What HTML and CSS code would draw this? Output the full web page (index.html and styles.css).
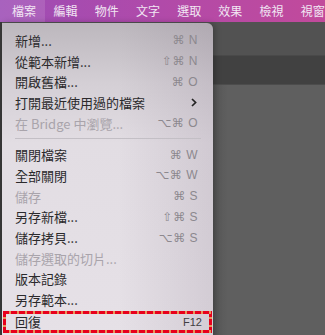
FILE: index.html
```html
<!DOCTYPE html>
<html lang="zh-Hant">
  <head>
    <meta charset="UTF-8" />
    <title>檔案選單</title>
    <link rel="stylesheet" href="styles.css">
  </head>
  <body>
    <div class="menubar">
      <span class="menubar-item active">檔案</span>
      <span class="menubar-item">編輯</span>
      <span class="menubar-item">物件</span>
      <span class="menubar-item">文字</span>
      <span class="menubar-item">選取</span>
      <span class="menubar-item">效果</span>
      <span class="menubar-item">檢視</span>
      <span class="menubar-item">視窗</span>
    </div>

    <div class="workspace">
      <div class="app-bar"></div>
      <div class="control-bar"></div>
      <div class="canvas"></div>

      <div class="dropdown">
        <div class="item"><span>新增...</span><span class="keys">⌘ N</span></div>
        <div class="item"><span>從範本新增...</span><span class="keys">⇧⌘ N</span></div>
        <div class="item"><span>開啟舊檔...</span><span class="keys">⌘ O</span></div>
        <div class="item">
          <span>打開最近使用過的檔案</span>
          <svg class="chevron" width="6" height="9" viewBox="0 0 6 9">
            <path d="M1 1 L4.6 4.5 L1 8" fill="none" stroke="#222" stroke-width="1.7" />
          </svg>
        </div>
        <div class="item disabled"><span>在 Bridge 中瀏覽...</span><span class="keys">⌥⌘ O</span></div>

        <div class="separator"></div>

        <div class="item"><span>關閉檔案</span><span class="keys">⌘ W</span></div>
        <div class="item"><span>全部關閉</span><span class="keys">⌥⌘ W</span></div>
        <div class="item disabled"><span>儲存</span><span class="keys">⌘ S</span></div>
        <div class="item"><span>另存新檔...</span><span class="keys">⇧⌘ S</span></div>
        <div class="item"><span>儲存拷貝...</span><span class="keys">⌥⌘ S</span></div>
        <div class="item disabled"><span>儲存選取的切片...</span></div>
        <div class="item"><span>版本記錄</span></div>
        <div class="item"><span>另存範本...</span></div>
        <div class="item highlight"><span>回復</span><span class="fkey">F12</span></div>
      </div>
    </div>
  </body>
</html>
```

FILE: styles.css
```css
body {
    margin: 0;
    background-color: #5f5f5f;
    font-family: 'Noto Sans CJK TC', 'Noto Sans', sans-serif;
    overflow: hidden;
}

.menubar {
    height: 22px;
    display: flex;
    align-items: center;
    background: linear-gradient(to right, #9d4db5 0%, #b14aa9 50%, #c24a9b 100%);
}

.menubar-item {
    width: 41.2px;
    height: 22px;
    line-height: 22px;
    text-align: center;
    font-size: 12px;
    color: #f1e6f3;
    flex-shrink: 0;
}

.menubar-item.active {
    width: 45px;
    padding-left: 3px;
    box-sizing: border-box;
    background-color: rgba(255, 255, 255, 0.12);
}

.workspace {
    position: relative;
    border-left: 2px solid #393939;
}

.app-bar {
    height: 33px;
    background-color: #525252;
}

.control-bar {
    height: 28px;
    background-color: #414141;
    border-top: 1px solid #494949;
    border-bottom: 1px solid #4c4c4c;
}

.canvas {
    height: 260px;
    background: linear-gradient(to right, #545454 208px, #5f5f5f 226px);
}

/* the open File menu */
.dropdown {
    position: absolute;
    top: 1px;
    left: 0;
    width: 211px;
    padding-top: 7px;
    padding-bottom: 8px;
    border-top-right-radius: 6px;
    background:
        linear-gradient(to right, rgba(90, 70, 95, 0) 55%, rgba(90, 70, 95, 0.13) 100%),
        linear-gradient(to bottom, #bcb7bd 0, #d4cfd5 60px, #e2dde3 120px, #e6e1e7 100%);
    box-shadow: 2px 0 6px rgba(0, 0, 0, 0.25);
    font-size: 13px;
    color: #2b2a2c;
}

.item {
    height: 20.7px;
    display: flex;
    align-items: center;
    justify-content: space-between;
    padding: 0 15px 0 13px;
    white-space: nowrap;
}

.item.disabled {
    color: #a9a4ab;
}

.keys {
    font-family: 'Liberation Sans', 'DejaVu Sans', sans-serif;
    font-size: 12px;
    color: #8c888e;
    letter-spacing: 0.5px;
}

.chevron {
    margin-right: 1px;
}

.separator {
    height: 1px;
    margin: 4.5px 12px 5.5px 13px;
    background-color: #c3bfc5;
}

.item.highlight {
    height: 22px;
    box-sizing: border-box;
    margin: 1px 1px 0 1px;
    padding: 0 10px 0 12px;
    background:
        repeating-linear-gradient(90deg, #e8001c 0 6px, #e8955a 6px 8px) top / 100% 3px no-repeat,
        repeating-linear-gradient(90deg, #e8001c 0 6px, #e8955a 6px 8px) bottom / 100% 3px no-repeat,
        repeating-linear-gradient(180deg, #e8001c 0 6px, #e8955a 6px 8px) left / 3px 100% no-repeat,
        repeating-linear-gradient(180deg, #e8001c 0 6px, #e8955a 6px 8px) right / 3px 100% no-repeat;
}

.fkey {
    font-family: 'Liberation Sans', sans-serif;
    font-size: 11px;
    color: #403e42;
}
```
